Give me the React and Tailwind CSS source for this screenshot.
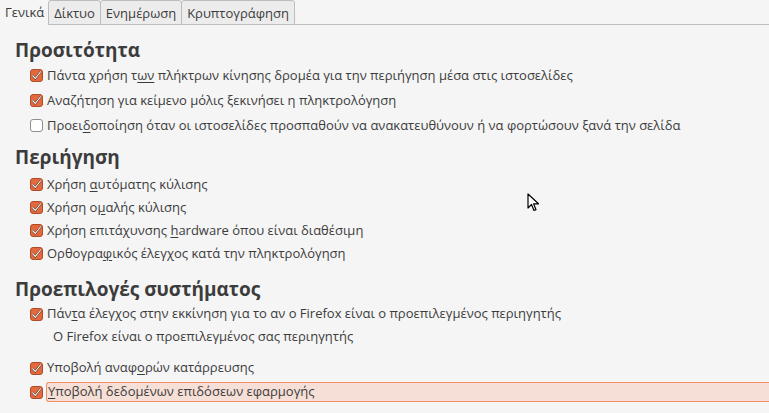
import React from 'react';

const tabs = ['Γενικά', 'Δίκτυο', 'Ενημέρωση', 'Κρυπτογράφηση'];

function CheckBox({ checked }) {
    if (!checked) {
        return <span className="w-[13px] h-[13px] rounded-[3px] border border-[#8f8f8f] bg-white shrink-0" />;
    }
    return (
        <span className="w-[13px] h-[13px] rounded-[3px] border border-[#b04c26] bg-[#e2693f] shrink-0 flex items-center justify-center">
            <svg width="11" height="11" viewBox="0 0 11 11">
                <path d="M1.5 5.5 L4.3 8.5 L9.8 1.5" fill="none" stroke="#4a2a1c" strokeWidth="2" />
                <path d="M1.5 5.5 L4.3 8.5 L9.8 1.5" fill="none" stroke="#ffffff" strokeWidth="1.1" />
            </svg>
        </span>
    );
}

// label may carry an underlined mnemonic: [before, key, after]
function Row({ checked = true, label, focused = false, h = 'h-[25px]' }) {
    const [a, k, b] = label;
    return (
        <div className={`flex items-center pl-[30px] ${h}`}>
            <CheckBox checked={checked} />
            <span className={`ml-[3px] h-[20px] flex items-center pl-[1px] ${focused ? 'flex-1 bg-[#f6dfd6] border border-[#f0916a] border-r-0 rounded-l-[3px]' : ''}`}>
                <span className="whitespace-pre">{a}{k && <span className="underline underline-offset-2">{k}</span>}{b}</span>
            </span>
        </div>
    );
}

function Heading({ children, className = '' }) {
    return <h2 className={`pl-[15px] h-[24px] flex items-center text-[19px] font-bold text-[#3c3c3c] ${className}`}>{children}</h2>;
}

export default function App() {
    return (
        <div className="relative w-[769px] h-[413px] overflow-hidden bg-[#f5f5f5] text-[#3c3c3c] text-[13px]" style={{ fontFamily: '"Open Sans", "DejaVu Sans", sans-serif' }}>
            {/* tab strip */}
            <div className="flex h-[25px]">
                {tabs.map((t, i) => (
                    <div
                        key={t}
                        className={i === 0
                            ? 'px-[5px] pt-[3px] text-[13px]'
                            : 'px-[5px] pt-[3px] text-[13px] bg-[#ececec] border border-[#bdbdbd] rounded-t-[3px] -ml-px first:ml-0'}
                    >
                        {t}
                    </div>
                ))}
                <div className="flex-1 border-b border-[#bdbdbd]" />
            </div>

            <Heading className="mt-[13px]">Προσιτότητα</Heading>
            <div className="mt-[1px]">
                <Row label={['Πάντα χρήση τ', 'ων', ' πλήκτρων κίνησης δρομέα για την περιήγηση μέσα στις ιστοσελίδες']} />
                <Row label={['Αναζήτηση για κείμενο μόλις ξεκινήσει η πληκτρολόγηση']} />
                <Row checked={false} label={['Προει', 'δ', 'οποίηση όταν οι ιστοσελίδες προσπαθούν να ανακατευθύνουν ή να φορτώσουν ξανά την σελίδα']} />
            </div>

            <Heading className="mt-[7px]">Περιήγηση</Heading>
            <div className="mt-[4px]">
                <Row h="h-[23px]" label={['Χρήση ', 'α', 'υτόματης κύλισης']} />
                <Row h="h-[23px]" label={['Χρήση ο', 'μ', 'αλής κύλισης']} />
                <Row h="h-[23px]" label={['Χρήση επιτάχυνσης ', 'h', 'ardware όπου είναι διαθέσιμη']} />
                <Row h="h-[23px]" label={['Ορθογρα', 'φ', 'ικός έλεγχος κατά την πληκτρολόγηση']} />
            </div>

            <Heading className="mt-[12px]">Προεπιλογές συστήματος</Heading>
            <div className="mt-[1px]">
                <Row h="h-[24px]" label={['Πάν', 'τ', 'α έλεγχος στην εκκίνηση για το αν ο Firefox είναι ο προεπιλεγμένος περιηγητής']} />
                <div className="pl-[53px] h-[22px] flex items-center">Ο Firefox είναι ο προεπιλεγμένος σας περιηγητής</div>
                <div className="h-[8px]" />
                <Row h="h-[24px]" label={['Υποβολή αναφ', 'ο', 'ρών κατάρρευσης']} />
                <Row h="h-[24px]" focused label={['', 'Υ', 'ποβολή δεδομένων επιδόσεων εφαρμογής']} />
            </div>

            {/* mouse pointer over the page */}
            <svg className="absolute left-[527px] top-[193px]" width="14" height="20" viewBox="0 0 14 20">
                <path d="M1 1 L1 15 L4.5 11.5 L7 17.5 L9 16.7 L6.6 10.8 L11.5 10.8 Z" fill="#ffffff" stroke="#000000" strokeWidth="1.2" strokeLinejoin="round" />
            </svg>
        </div>
    );
}
